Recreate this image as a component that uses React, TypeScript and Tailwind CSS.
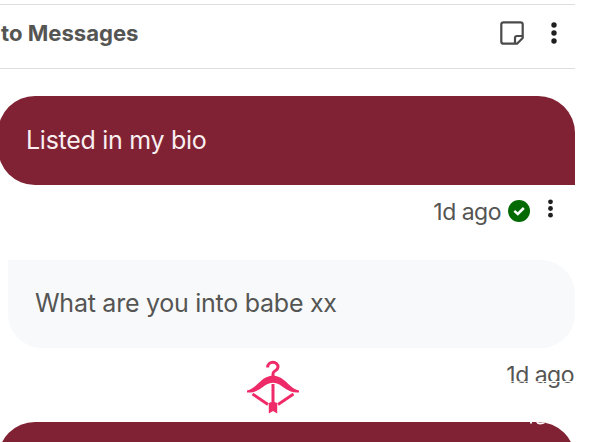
const INK = "#1f1f1f"

function Dots({className, r}: {className: string; r: number}) {
    return (
        <svg viewBox="0 0 6 22" className={className} fill={INK}>
            <circle cx="3" cy="3" r={r} />
            <circle cx="3" cy="11" r={r} />
            <circle cx="3" cy="19" r={r} />
        </svg>
    )
}

function NoteIcon() {
    return (
        <svg viewBox="0 0 26 26" className="w-[26px] h-[26px]" fill="none" stroke="#4a4a4a" strokeWidth="2.2" strokeLinejoin="round">
            <path d="M4.5 2.3H21.5Q23.7 2.3 23.7 4.5V18L18 23.7H4.5Q2.3 23.7 2.3 21.5V4.5Q2.3 2.3 4.5 2.3Z" />
            <path d="M16 23.5V18Q16 16 18 16H23.5" />
        </svg>
    )
}

function SentBadge() {
    return (
        <svg viewBox="0 0 22 22" className="w-[22px] h-[22px]">
            <circle cx="11" cy="11" r="11" fill="#046a04" />
            <path d="M6.3 10.8L9.8 14L15.8 8" fill="none" stroke="#fff" strokeWidth="2.5" />
        </svg>
    )
}

function HangerBow() {
    return (
        <svg viewBox="0 0 54 54" className="w-[54px] h-[54px]" fill="none" stroke="#ee2a68">
            <path d="M21.6 7.6C21.6 .5 32.4 .8 32 7.2C31.8 11 27 10.4 27 13.5V18" strokeWidth="3" />
            <path d="M1 30.5C10 28.5 14 19.5 21 17Q27 14 33 17C40 19.5 44 28.5 53 30.5V32.5C42 33.5 38 26 31 23.5Q27 22 23 23.5C16 26 12 33.5 1 32.5Z" fill="#ee2a68" stroke="none" />
            <path d="M27 24V46" strokeWidth="3" />
            <path d="M6.5 34L22 44.5M47.5 34L32 44.5" strokeWidth="2.8" />
            <path d="M22.8 43L27 41.5L31.2 43V53.5L27 51L22.8 53.5Z" fill="#ee2a68" stroke="none" />
        </svg>
    )
}

export default function App() {
    return (
        <div className="w-[600px] h-[442px] overflow-hidden bg-white font-['Inter',sans-serif] text-[#555553] pt-1">
            <div className="w-[575px]">
                <header className="flex items-center h-[65px] border-y border-[#dedede] pl-px pb-[7px]">
                    <h1 className="flex-1 text-[22.1px] leading-7 font-bold whitespace-nowrap">to Messages</h1>
                    <NoteIcon />
                    <Dots r={2.7} className="w-[6px] h-[22px] ml-[26px] mr-[18px]" />
                </header>

                <div className="mt-[27px] -ml-[2px] h-[89px] rounded-[37px] rounded-br-none bg-[#802233] flex items-center pl-[28px] text-[25px] tracking-[-0.28px] text-[#f9eef0]">
                    Listed in my bio
                </div>
                <div className="flex items-center h-[52px] text-[23px] tracking-[-0.5px]">
                    <span className="ml-auto pt-[2px]">1d ago</span>
                    <span className="ml-[7px]"><SentBadge /></span>
                    <Dots r={2.9} className="w-[5px] h-[19px] ml-[18px] mr-[22px] mb-[6px]" />
                </div>

                <div className="mt-[23px] ml-2 h-[88px] rounded-[34px] rounded-tl-none bg-[#f8f9fb] flex items-center pl-[27px] pb-px text-[25px] tracking-[-0.26px]">
                    What are you into babe xx
                </div>
                <div className="relative h-[74px] text-[23px] tracking-[-0.5px]">
                    <div className="flex justify-end pt-[10px] pr-px">1d ago</div>
                    <div className="absolute left-[246px] top-[12px]"><HangerBow /></div>
                    <div className="absolute right-[37px] top-[33px] w-[31px] h-px bg-white/70" />
                    <div className="absolute right-0 top-[33px] w-[37px] h-px bg-white" />
                </div>
                <div className="-ml-[2px] h-[89px] rounded-[37px] rounded-br-none bg-[#802233] overflow-hidden">
                    <svg viewBox="0 0 20 4" className="w-5 h-1 ml-[530px]" fill="none" stroke="#fff" strokeWidth="2">
                        <path d="M3 0V1.5M9 0Q10 1.5 12 1.5Q15 1.5 17 0" />
                    </svg>
                </div>
            </div>
        </div>
    )
}
